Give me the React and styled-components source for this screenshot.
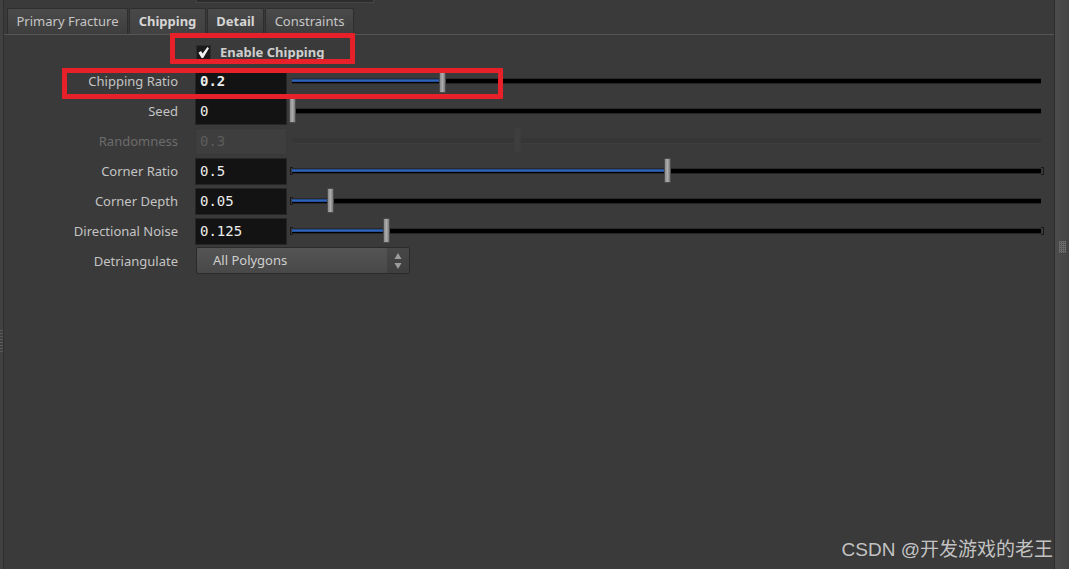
import React from "react";
import styled, { createGlobalStyle } from "styled-components";

const GlobalStyle = createGlobalStyle`
  html, body { margin: 0; padding: 0; background: #3a3a3a; }
  body { font-family: "Noto Sans", "Open Sans", sans-serif; }
`;

const TRACK = 750;

const params = [
  { label: "Chipping Ratio", value: "0.2", v: 0.2, bold: true },
  { label: "Seed", value: "0", v: 0 },
  { label: "Randomness", value: "0.3", v: 0.3, disabled: true },
  { label: "Corner Ratio", value: "0.5", v: 0.5, left: true, right: true },
  { label: "Corner Depth", value: "0.05", v: 0.05, left: true },
  { label: "Directional Noise", value: "0.125", v: 0.125, left: true, right: true },
];

const tabs = [
  { name: "Primary Fracture", w: 121 },
  { name: "Chipping", w: 77, active: true },
  { name: "Detail", w: 57, bold: true },
  { name: "Constraints", w: 89 },
];

function Slider({ v, disabled, left, right }) {
  const x = v * TRACK;
  return (
    <SliderBox>
      <Track $disabled={disabled}>
        {!disabled && v > 0 && <Fill style={{ width: x }} />}
      </Track>
      {left && <Bracket $side="left" />}
      {right && <Bracket $side="right" />}
      <Handle $disabled={disabled} style={{ left: x - 2 }} />
    </SliderBox>
  );
}

function App() {
  return (
    <>
      <GlobalStyle />
      <Screen>
        <LeftEdge>
          <Dots />
        </LeftEdge>
        <Main>
          <TopStrip>
            <Stub />
          </TopStrip>
          <TabBar>
            {tabs.map((t) => (
              <Tab key={t.name} $w={t.w} $active={t.active} $bold={t.bold}>
                {t.name}
              </Tab>
            ))}
          </TabBar>
          <Panel>
            <ToggleRow>
              <Check>
                <svg width="15" height="15" viewBox="0 0 15 15">
                  <rect x="0.5" y="0.5" width="14" height="14" fill="#1a1a1a" stroke="#2c2c2c" />
                  <path d="M2.4 7.8 L5 6 L6.6 8.6 L11.4 2 L13 3.2 L7.2 13 L5.6 13 Z" fill="#f0f0f0" />
                </svg>
              </Check>
              <ToggleLabel>Enable Chipping</ToggleLabel>
            </ToggleRow>
            {params.map((p) => (
              <ParmRow key={p.label}>
                <Label $disabled={p.disabled}>{p.label}</Label>
                <Field $disabled={p.disabled} $bold={p.bold}>{p.value}</Field>
                <Slider v={p.v} disabled={p.disabled} left={p.left} right={p.right} />
              </ParmRow>
            ))}
            <ParmRow>
              <Label>Detriangulate</Label>
              <Menu>
                <MenuText>All Polygons</MenuText>
                <MenuArrows>
                  <svg width="8" height="18" viewBox="0 0 8 18">
                    <path d="M4 1 L7.5 7 L0.5 7 Z" fill="#9c9c9c" />
                    <path d="M4 17 L7.5 11 L0.5 11 Z" fill="#9c9c9c" />
                  </svg>
                </MenuArrows>
              </Menu>
            </ParmRow>
          </Panel>
        </Main>
        <ScrollBar>
          <Grip>
            <svg width="7" height="12" viewBox="0 0 7 12">
              {[0, 1, 2, 3, 4, 5].map((i) => (
                <rect key={"h" + i} x="0" y={i * 2} width="7" height="1" fill="#6a6a6a" />
              ))}
              {[0, 2, 4, 6].map((i) => (
                <rect key={"v" + i} x={i} y="0" width="1" height="12" fill="#6a6a6a" />
              ))}
            </svg>
          </Grip>
        </ScrollBar>
        <Mark $x={170} $y={33} $w={185} $h={31} />
        <Mark $x={62} $y={68} $w={441} $h={31} />
        <Watermark>CSDN @开发游戏的老王</Watermark>
      </Screen>
    </>
  );
}

const Screen = styled.div`
  position: relative;
  width: 1069px;
  height: 569px;
  display: flex;
  background: #3a3a3a;
  overflow: hidden;
`;

const LeftEdge = styled.div`
  width: 3px;
  background: #414141;
  border-right: 1px solid #303030;
  padding-top: 330px;
  box-sizing: content-box;
`;

const Dots = styled.div`
  width: 3px;
  height: 22px;
  background: repeating-linear-gradient(#5a5a5a 0 1px, transparent 1px 3px);
`;

const Main = styled.div`
  flex: 1;
  display: flex;
  flex-direction: column;
`;

const TopStrip = styled.div`
  height: 8px;
  padding-left: 192px;
`;

const Stub = styled.div`
  width: 176px;
  height: 2px;
  background: #2c2c2c;
  border: 1px solid #454545;
  border-top: none;
`;

const TabBar = styled.div`
  display: flex;
  height: 26px;
  padding-left: 3px;
  gap: 1px;
  border-bottom: 1px solid #555555;
`;

const Tab = styled.div`
  width: ${(p) => p.$w}px;
  box-sizing: border-box;
  display: flex;
  align-items: center;
  justify-content: center;
  padding-bottom: 2px;
  border: 1px solid #2e2e2e;
  border-bottom: none;
  border-radius: 2px 2px 0 0;
  background: ${(p) =>
    p.$active
      ? "linear-gradient(#484848, #424242)"
      : "linear-gradient(#4a4a4a, #3e3e3e)"};
  color: ${(p) => (p.$active || p.$bold ? "#d6d6d6" : "#c6c6c6")};
  font-size: 13px;
  font-weight: ${(p) => (p.$active || p.$bold ? 700 : 400)};
`;

const Panel = styled.div`
  display: flex;
  flex-direction: column;
`;

const ToggleRow = styled.div`
  height: 32px;
  display: flex;
  align-items: center;
  padding-left: 192px;
  padding-top: 2px;
  box-sizing: border-box;
`;

const Check = styled.div`
  flex: none;
  width: 15px;
  height: 15px;
  display: flex;
`;

const ToggleLabel = styled.span`
  margin-left: 9px;
  font-size: 13px;
  font-weight: 700;
  color: #cfcfcf;
`;

const ParmRow = styled.div`
  height: 30px;
  display: flex;
  align-items: flex-start;
  padding-top: 1px;
  box-sizing: border-box;
`;

const Label = styled.div`
  width: 174px;
  height: 27px;
  line-height: 27px;
  text-align: right;
  font-size: 13px;
  color: ${(p) => (p.$disabled ? "#6c6c6c" : "#c4c4c4")};
`;

const Field = styled.div`
  margin-left: 17px;
  width: 92px;
  height: 27px;
  box-sizing: border-box;
  padding-left: 4px;
  line-height: 25px;
  background: ${(p) => (p.$disabled ? "#3e3e3e" : "#131313")};
  border: 1px solid ${(p) => (p.$disabled ? "#383838" : "#262626")};
  font-family: "DejaVu Sans Mono", "Liberation Mono", monospace;
  font-size: 14px;
  font-weight: ${(p) => (p.$bold ? 700 : 400)};
  color: ${(p) => (p.$disabled ? "#5c5c5c" : "#ececec")};
`;

const SliderBox = styled.div`
  position: relative;
  margin-left: 4px;
  width: ${TRACK}px;
  height: 27px;
`;

const Track = styled.div`
  position: absolute;
  left: 1px;
  right: 0;
  top: 10px;
  height: 6px;
  box-sizing: border-box;
  background: ${(p) => (p.$disabled ? "#363636" : "#000000")};
  border-top: 1px solid ${(p) => (p.$disabled ? "#363636" : "#2a2a2a")};
  border-bottom: 1px solid ${(p) => (p.$disabled ? "#3c3c3c" : "#262626")};
`;

const Fill = styled.div`
  height: 3px;
  background: linear-gradient(#1d3f78, #2e63b8 50%, #1d4688);
`;

const Bracket = styled.div`
  position: absolute;
  top: 9px;
  ${(p) => (p.$side === "left" ? "left: -1px;" : "right: -3px;")}
  width: 3px;
  height: 8px;
  box-sizing: border-box;
  border: 1px solid #1a1a1a;
  ${(p) => (p.$side === "left" ? "border-right: none;" : "border-left: none;")}
`;

const Handle = styled.div`
  position: absolute;
  top: 0;
  width: 7px;
  height: 25px;
  box-sizing: border-box;
  border-radius: 1px;
  border: 1px solid ${(p) => (p.$disabled ? "#3c3c3c" : "#4c4c4c")};
  background: ${(p) =>
    p.$disabled ? "#3e3e3e" : "linear-gradient(90deg, #8a8a8a, #acacac 50%, #787878)"};
`;

const Menu = styled.div`
  margin-left: 18px;
  margin-top: -1px;
  width: 214px;
  height: 27px;
  box-sizing: border-box;
  display: flex;
  border: 1px solid #2a2a2a;
  border-radius: 2px;
  background: linear-gradient(#545454, #484848);
`;

const MenuText = styled.div`
  flex: 1;
  padding-left: 16px;
  line-height: 25px;
  font-size: 13px;
  color: #cfcfcf;
`;

const MenuArrows = styled.div`
  width: 22px;
  display: flex;
  align-items: center;
  justify-content: center;
  background: linear-gradient(#474747, #3e3e3e);
`;

const ScrollBar = styled.div`
  width: 15px;
  border-left: 1px solid #2c2c2c;
  background: linear-gradient(90deg, #4c4c4c, #444444);
  display: flex;
  flex-direction: column;
  align-items: center;
  padding-top: 241px;
  box-sizing: border-box;
`;

const Grip = styled.div`
  width: 7px;
  height: 12px;
  display: flex;
`;

const Mark = styled.div`
  position: absolute;
  left: ${(p) => p.$x}px;
  top: ${(p) => p.$y}px;
  width: ${(p) => p.$w}px;
  height: ${(p) => p.$h}px;
  box-sizing: border-box;
  border: 5px solid #e8202a;
  border-radius: 1px;
  pointer-events: none;
`;

const Watermark = styled.div`
  position: absolute;
  right: 16px;
  bottom: 8px;
  font-family: "Liberation Sans", "Noto Sans CJK SC", sans-serif;
  font-size: 19px;
  color: rgba(214, 214, 214, 0.9);
  white-space: nowrap;
`;

export default App;
